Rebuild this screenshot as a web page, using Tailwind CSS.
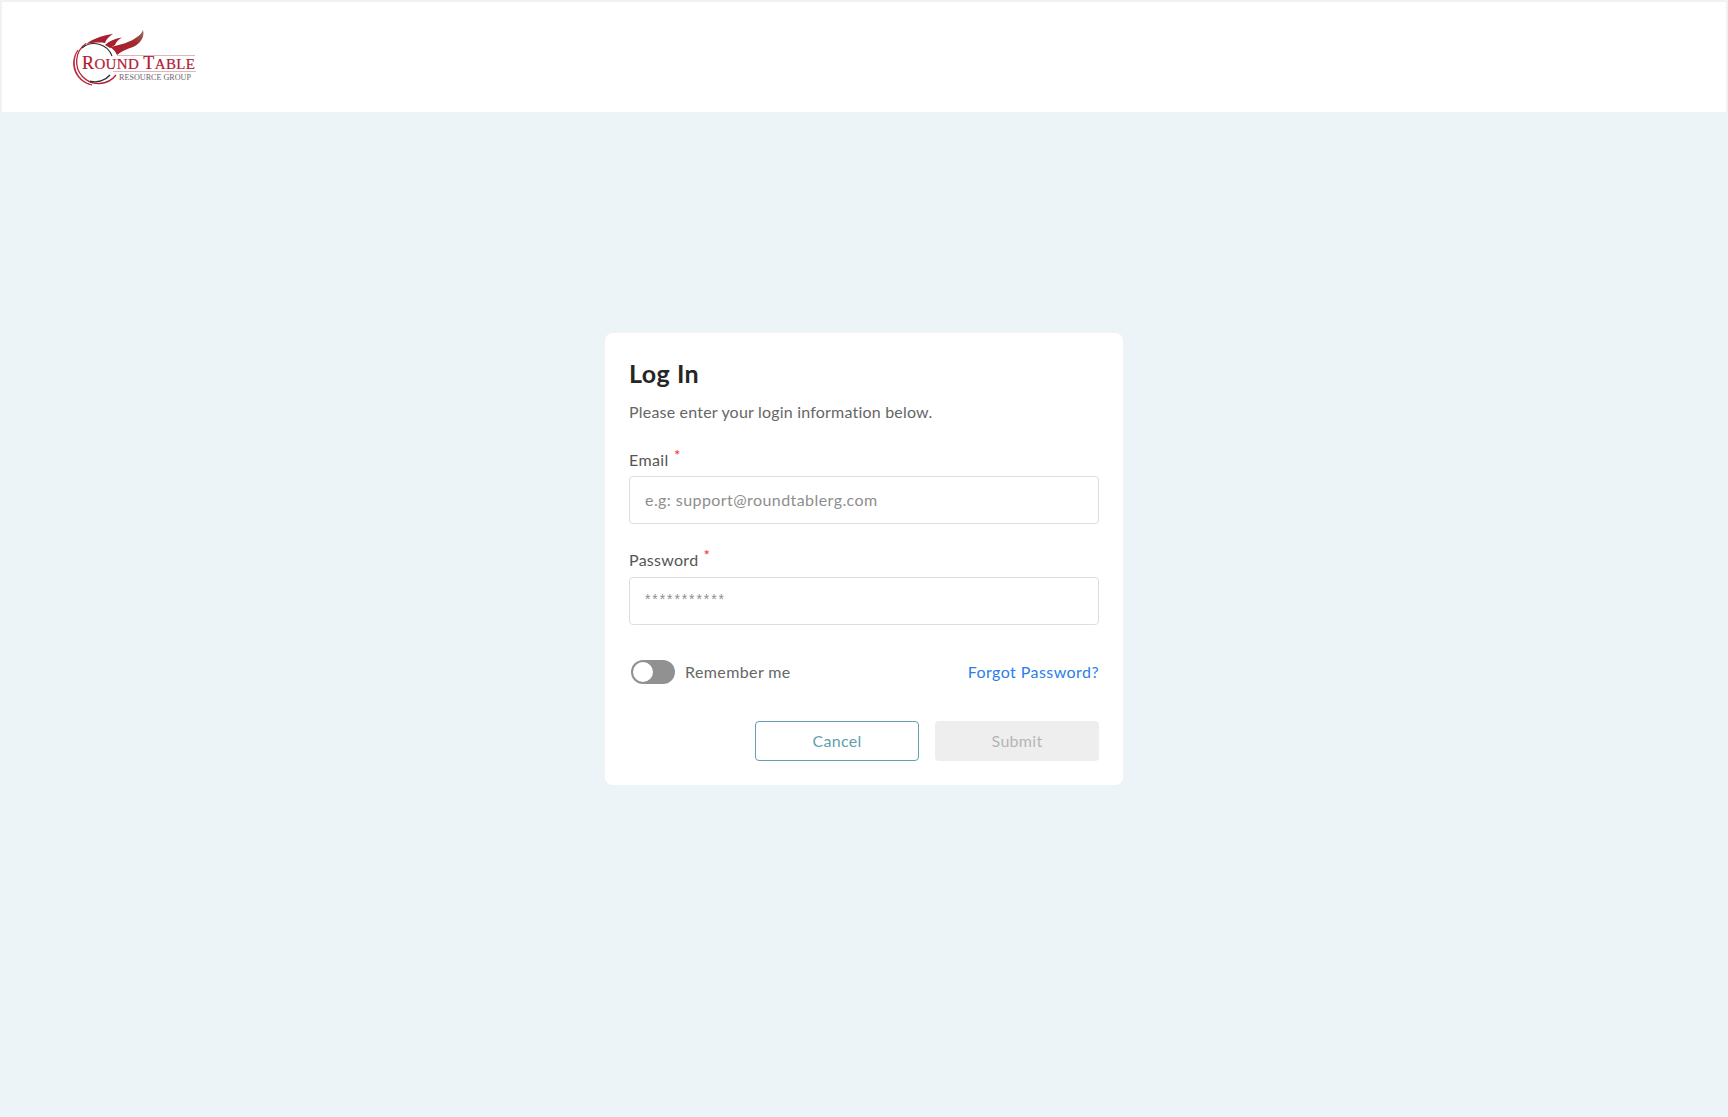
<!DOCTYPE html>
<html lang="en">
<head>
  <meta charset="UTF-8"/>
  <title>Log In</title>
  <script src="https://cdn.jsdelivr.net/npm/@tailwindcss/browser@4"></script>
</head>
<body class="bg-[#ecf4f7] min-h-screen font-['Lato',sans-serif] text-[16px]">

  <!-- Header -->
  <header class="bg-white h-[112px] border-2 border-b-0 border-[#f0f2f2] pl-[68px] pt-[26px]">
    <svg width="130" height="62" viewBox="70 28 130 62" class="block">
      <defs>
        <linearGradient id="wing" x1="0" y1="1" x2="1" y2="0">
          <stop offset="0" stop-color="#b01c2e"/>
          <stop offset="0.6" stop-color="#a3282c"/>
          <stop offset="1" stop-color="#8f6f5c"/>
        </linearGradient>
      </defs>
      <!-- ring -->
      <path d="M86 43.500 A22 22 0 1 0 116 75" fill="none" stroke="#b51f33" stroke-width="1.300"/>
      <path d="M78 50 A22 22 0 0 0 92 85 A23 23 0 0 1 78 50Z" fill="#b51f33" stroke="#b51f33" stroke-width="0.800"/>
      <path d="M82 48 A19 19 0 0 1 112 56" fill="none" stroke="#2b2b2b" stroke-width="1.100"/>
      <path d="M90 81 A19 19 0 0 0 110 75" fill="none" stroke="#2b2b2b" stroke-width="1.300"/>
      <!-- wings -->
      <path d="M86 44 C92 39 104 35 113 34 C108 37 106 40 105 43 C98 42 92 43 86 44Z" fill="#a81f2f"/>
      <path d="M105 45 C109 41 115 38.500 122 37.500 C118 40 116 42 115 45 L110 48Z" fill="#a81f2f"/>
      <path d="M110 47 C120 45 131 42 137 37 C140 35 142 33 143 30 C145 37 140 44 133 47 C127 49 122 51 117 55 C115 51 113 49 110 47Z" fill="url(#wing)"/>
      <!-- rules -->
      <line x1="117" y1="55.500" x2="195" y2="55.500" stroke="#d9b9bd" stroke-width="1"/>
      <line x1="113" y1="71.500" x2="196" y2="71.500" stroke="#d9b9bd" stroke-width="1"/>
      <!-- wordmark -->
      <text x="82" y="69" textLength="113" lengthAdjust="spacing" font-family="Liberation Serif" font-size="15" stroke="#b3182f" stroke-width="0.200" fill="#b3182f"><tspan font-size="18">R</tspan>OUND <tspan font-size="18">T</tspan>ABLE</text>
      <text x="119" y="80" textLength="72" lengthAdjust="spacingAndGlyphs" font-family="Liberation Serif" font-size="7.500" fill="#6d6468">RESOURCE GROUP</text>
    </svg>
  </header>

  <main class="pt-[221px]">
    <!-- Login card -->
    <div class="mx-auto w-[518px] h-[452px] bg-white rounded-[8px] px-6 pt-[22px]">
      <h1 class="text-[25px] leading-[36px] font-bold text-[#262626] tracking-[0.5px]">Log In</h1>
      <p class="mt-[9px] leading-[24px] text-[#666666] tracking-[0.2px]">Please enter your login information below.</p>

      <label class="block mt-[24px] leading-[24px] text-[#555555] tracking-[0.4px]">Email <span class="relative -top-[6px] ml-[1px] text-[#f04a4a] text-[14px] font-bold">*</span></label>
      <input type="text" placeholder="e.g: support@roundtablerg.com" class="block mt-[3px] w-full h-[48px] px-[15px] pb-[2px] bg-white border border-[#dedede] rounded-[4px] tracking-[0.43px] placeholder:text-[#8e8e8e]"/>

      <label class="block mt-[24px] leading-[24px] text-[#555555] tracking-[0.28px]">Password <span class="relative -top-[6px] ml-[1px] text-[#f04a4a] text-[14px] font-bold">*</span></label>
      <div class="mt-[4px] h-[48px] px-[15px] pt-[11px] border border-[#dedede] rounded-[4px] text-[#8e8e8e] font-['Liberation_Sans',sans-serif] text-[14px] leading-[20px] tracking-[1.9px]">***********</div>

      <div class="mt-[35px] flex items-center justify-between h-[24px]">
        <div class="flex items-center gap-[10px]">
          <div class="ml-[2px] w-[44px] h-[24px] rounded-full bg-[#919191] p-[2px]">
            <div class="w-[20px] h-[20px] rounded-full bg-white"></div>
          </div>
          <span class="text-[#666666] tracking-[0.4px]">Remember me</span>
        </div>
        <a href="#" class="text-[#2b7de9] tracking-[0.44px]">Forgot Password?</a>
      </div>

      <div class="mt-[37px] flex justify-end gap-4">
        <button class="w-[164px] h-[40px] border border-[#62a0ae] rounded-[4px] text-[#62a0ae] tracking-[0.28px]">Cancel</button>
        <button disabled class="w-[164px] h-[40px] bg-[#eeeeee] rounded-[4px] text-[#b5b5b5] tracking-[0.28px]">Submit</button>
      </div>
    </div>
  </main>

</body>
</html>
